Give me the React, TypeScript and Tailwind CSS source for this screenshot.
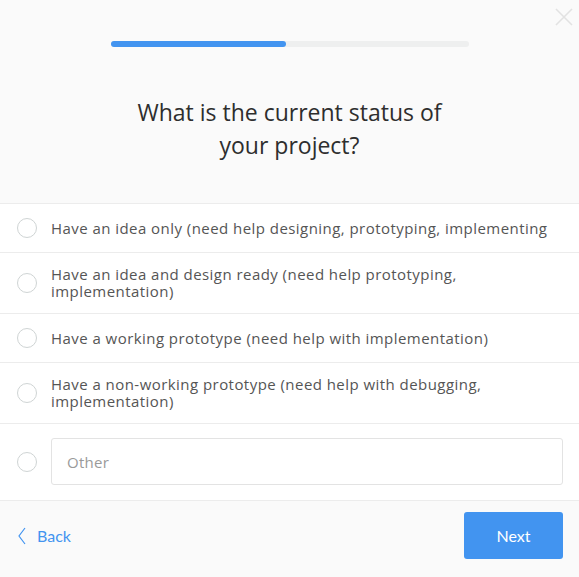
import { useState } from "react"

const options = [
  "Have an idea only (need help designing, prototyping, implementing",
  "Have an idea and design ready (need help prototyping, implementation)",
  "Have a working prototype (need help with implementation)",
  "Have a non-working prototype (need help with debugging, implementation)",
]

function Radio() {
  return <span className="w-5 h-5 shrink-0 rounded-full border border-[#cfd4d4] bg-white" />
}

export default function App() {
  const [other, setOther] = useState("")

  return (
    <div
      className="min-h-screen flex flex-col bg-[#fafafa] text-[#333]"
      style={{ fontFamily: "'Open Sans', Lato, sans-serif" }}
    >
      <header className="relative border-b border-[#ececec] h-[204px] pt-[41px]">
        <button className="absolute top-[8px] right-[6px] w-[18px] h-[18px]">
          <svg viewBox="0 0 18 18" className="w-full h-full" stroke="#e2e2e2" strokeWidth="1.6">
            <path d="M1 1L17 17M17 1L1 17" />
          </svg>
        </button>
        <div className="mx-auto w-[358px] h-[6px] rounded-full bg-[#eeefef]">
          <div className="h-full w-[49%] rounded-full bg-[#4294f0]" />
        </div>
        <h1 className="mt-[49px] text-center text-[23px] leading-[33px] text-[#2e2e2e]">
          What is the current status of
          <br />
          your project?
        </h1>
      </header>

      <main className="bg-white">
        {options.map((o) => (
          <label
            key={o}
            className="flex items-center gap-[14px] pl-[17px] pr-4 min-h-[49px] py-[13px] border-b border-[#ececec] cursor-pointer"
          >
            <Radio />
            <span className="text-[15px] leading-[17px] tracking-[0.45px] text-[#555]">{o}</span>
          </label>
        ))}
        <div className="flex items-center gap-[14px] pl-[17px] pr-4 pt-[14px] pb-[15px] border-b border-[#ececec]">
          <Radio />
          <input
            value={other}
            onChange={(e) => setOther(e.target.value)}
            placeholder="Other"
            className="flex-1 h-[47px] rounded-[3px] border border-[#e3e3e3] px-[15px] text-[15px] tracking-[0.3px] text-[#555] placeholder:text-[#9a9a9a] outline-none"
          />
        </div>
      </main>

      <footer
        className="flex-1 flex items-start justify-between pl-[18px] pr-4 pt-[11px]"
        style={{ fontFamily: "Lato, sans-serif" }}
      >
        <button className="flex items-center gap-[11px] h-[47px] text-[16px] text-[#4294f0]">
          <svg viewBox="0 0 8 18" className="w-[8px] h-[18px]" fill="none" stroke="#4294f0" strokeWidth="1.2">
            <path d="M7 1L1 9L7 17" />
          </svg>
          Back
        </button>
        <button className="w-[99px] h-[47px] rounded-[3px] bg-[#4294f0] text-white text-[16px]">
          Next
        </button>
      </footer>
    </div>
  )
}
